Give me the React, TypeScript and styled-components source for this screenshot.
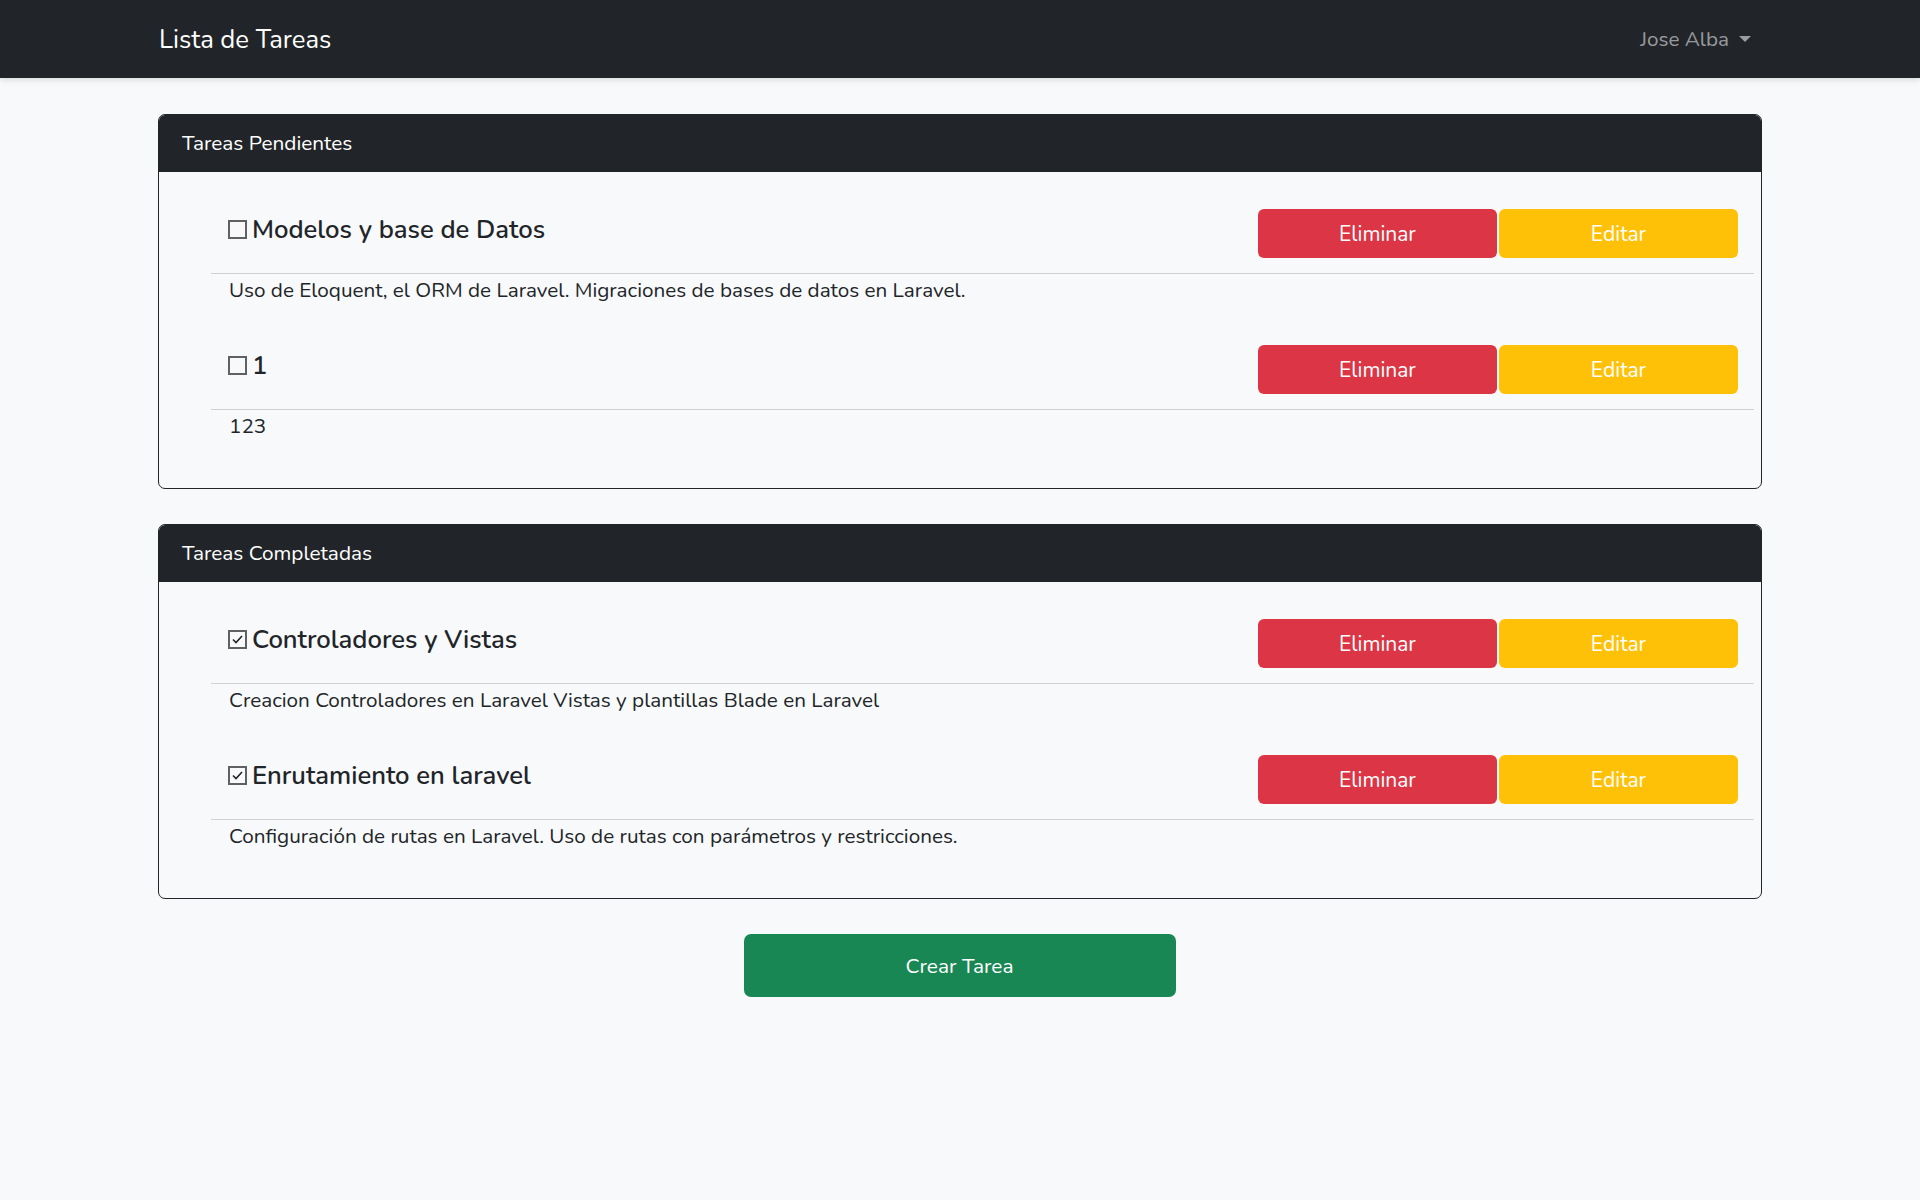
import React from "react";
import styled, { createGlobalStyle } from "styled-components";

const Global = createGlobalStyle`
  html, body { margin: 0; padding: 0; }
  body {
    background: #f8f9fa;
    font-family: Nunito, Lato, "Noto Sans", sans-serif;
    color: #212529;
  }
`;

const NavBar = styled.nav`
  height: 78px;
  background: #212529;
  box-shadow: 0 2px 6px rgba(0, 0, 0, 0.12);
`;

const Container = styled.div`
  width: 1604px;
  margin: 0 auto;
`;

const NavInner = styled(Container)`
  height: 100%;
  display: flex;
  align-items: center;
  justify-content: space-between;
`;

const Brand = styled.a`
  color: #fff;
  font-size: 25.7px;
  text-decoration: none;
  padding-left: 1px;
`;

const UserMenu = styled.a`
  color: rgba(255, 255, 255, 0.55);
  font-size: 20.7px;
  display: flex;
  align-items: center;
  gap: 10px;
  margin-right: 11px;
  margin-top: -1px;
`;

const Caret = styled.span`
  width: 0;
  height: 0;
  border-left: 6px solid transparent;
  border-right: 6px solid transparent;
  border-top: 6px solid rgba(255, 255, 255, 0.55);
  margin-top: 1px;
`;

const Main = styled(Container)`
  display: flex;
  flex-direction: column;
  gap: 35px;
  padding-top: 36px;
`;

const Card = styled.section`
  border: 1px solid #212529;
  border-radius: 7px;
  overflow: hidden;
  background: #f8f9fa;
`;

const CardHeader = styled.header`
  background: #212529;
  color: #fff;
  height: 57px;
  box-sizing: border-box;
  padding: 0 0 2px 23px;
  display: flex;
  align-items: center;
  font-size: 20.8px;
`;

const CardBody = styled.div`
  padding: 37px 7px 47px 52px;
  display: flex;
  flex-direction: column;
  gap: 40px;
`;

const Item = styled.div`
  display: flex;
  flex-direction: column;
`;

const ItemHead = styled.div`
  display: flex;
  align-items: center;
  justify-content: space-between;
  padding: 0 16px 15px 17px;
  height: 49px;
  border-bottom: 1px solid #cfd1d3;
  box-sizing: content-box;
`;

const Title = styled.h4`
  margin: 0;
  font-size: 25.6px;
  font-weight: 600;
  display: flex;
  align-items: center;
  gap: 5px;
  margin-top: -9px;
  color: #212529;
`;

const Actions = styled.div`
  display: flex;
  gap: 2px;
`;

const Button = styled.button<{ $variant: "danger" | "warning" }>`
  width: 239px;
  height: 49px;
  border: none;
  border-radius: 6px;
  color: #fff;
  font-family: inherit;
  font-size: 21px;
  background: ${(p) => (p.$variant === "danger" ? "#dc3545" : "#ffc107")};
  cursor: pointer;
`;

const Desc = styled.p`
  margin: 2px 0 0 18px;
  font-size: 20.7px;
  line-height: 29px;
`;

const CreateRow = styled.div`
  display: flex;
  justify-content: center;
  padding-right: 1px;
`;

const CreateButton = styled.button`
  width: 432px;
  height: 63px;
  border: none;
  border-radius: 7px;
  background: #198754;
  color: #fff;
  font-family: inherit;
  font-size: 20.9px;
  cursor: pointer;
`;

const Check = ({ checked }: { checked: boolean }) => (
  <svg width="19" height="19" viewBox="0 0 19 19" aria-hidden>
    <rect x="1" y="1" width="17" height="17" fill="none" stroke="#5f6163" strokeWidth="2" />
    {checked && <path d="M5 9.5 L8 12.5 L14 6" fill="none" stroke="#212529" strokeWidth="1.6" />}
  </svg>
);

type Task = { title: string; desc: string };

const pending: Task[] = [
  { title: "Modelos y base de Datos", desc: "Uso de Eloquent, el ORM de Laravel. Migraciones de bases de datos en Laravel." },
  { title: "1", desc: "123" },
];

const done: Task[] = [
  { title: "Controladores y Vistas", desc: "Creacion Controladores en Laravel Vistas y plantillas Blade en Laravel" },
  { title: "Enrutamiento en laravel", desc: "Configuración de rutas en Laravel. Uso de rutas con parámetros y restricciones." },
];

const TaskCard = ({ heading, tasks, checked }: { heading: string; tasks: Task[]; checked: boolean }) => (
  <Card>
    <CardHeader>{heading}</CardHeader>
    <CardBody>
      {tasks.map((t) => (
        <Item key={t.title}>
          <ItemHead>
            <Title>
              <Check checked={checked} />
              {t.title}
            </Title>
            <Actions>
              <Button $variant="danger">Eliminar</Button>
              <Button $variant="warning">Editar</Button>
            </Actions>
          </ItemHead>
          <Desc>{t.desc}</Desc>
        </Item>
      ))}
    </CardBody>
  </Card>
);

export default function App() {
  return (
    <>
      <Global />
      <NavBar>
        <NavInner>
          <Brand>Lista de Tareas</Brand>
          <UserMenu>
            Jose Alba <Caret />
          </UserMenu>
        </NavInner>
      </NavBar>
      <Main>
        <TaskCard heading="Tareas Pendientes" tasks={pending} checked={false} />
        <TaskCard heading="Tareas Completadas" tasks={done} checked={true} />
        <CreateRow>
          <CreateButton>Crear Tarea</CreateButton>
        </CreateRow>
      </Main>
    </>
  );
}
